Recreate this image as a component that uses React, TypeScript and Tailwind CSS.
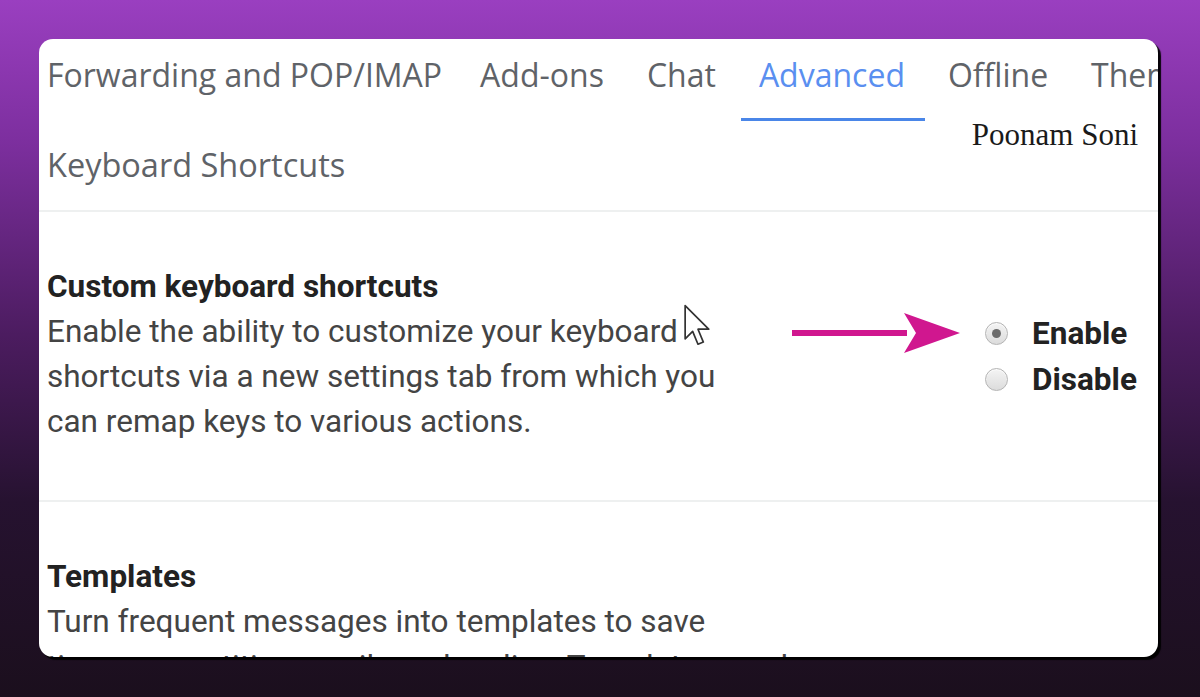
import React from 'react';

const tabs = ['Forwarding and POP/IMAP', 'Add-ons', 'Chat', 'Advanced', 'Offline', 'Themes'];

const Radio: React.FC<{ checked?: boolean; label: string }> = ({ checked, label }) => (
  <label className="flex items-center h-[46px]">
    <span className="w-[23px] h-[23px] rounded-full border border-[#b4b4b4] bg-gradient-to-b from-[#f4f4f4] to-[#dcdcdc] flex items-center justify-center shadow-[inset_0_1px_1px_rgba(255,255,255,0.8)]">
      {checked && <span className="w-[9px] h-[9px] rounded-full bg-[#6b6b6b]"></span>}
    </span>
    <span className="ml-[24px] text-[31.5px] font-bold text-[#222]">{label}</span>
  </label>
);

const Cursor = () => (
  <svg width="30" height="46" viewBox="0 0 28 42" className="absolute left-[636px] top-[-6px]">
    <path d="M2 2 L2 33 L9 26 L14 38 L19 36 L14 24 L24 24 Z" fill="#fff" stroke="#333" strokeWidth="1.6" strokeLinejoin="round" />
  </svg>
);

const App: React.FC = () => {
  return (
    <div className="w-[1200px] h-[697px] pt-[39px] pl-[39px] bg-[linear-gradient(180deg,#9a3fc0_0%,#7d2f9f_20%,#4c1c60_48%,#261230_72%,#1b0f1d_100%)] font-['Roboto',sans-serif]">
      <div className="relative w-[1119px] h-[618px] rounded-[14px] bg-white overflow-hidden shadow-[3px_3px_1px_rgba(0,0,0,0.95)]">
        {/* tabs */}
        <div className="flex h-[82px] pl-[8px] font-['Open_Sans',sans-serif] text-[32px] text-[#5f6368] whitespace-nowrap">
          {tabs.map((t, i) => (
            <div key={t} className={`relative flex items-center pb-[10px] ${i === 0 ? 'mr-[38px]' : 'mr-[43px]'} ${t === 'Advanced' ? 'text-[#5a8ff0]' : ''}`}>
              {t}
              {t === 'Advanced' && <span className="absolute left-[-18px] right-[-20px] bottom-0 h-[3px] bg-[#4a86e8]"></span>}
            </div>
          ))}
        </div>
        <div className="absolute right-[20px] top-[73px] font-['Liberation_Serif',serif] text-[31px] text-[#1a1a1a]">Poonam Soni</div>
        <div className="h-[89px] pl-[8px] flex items-center pb-[1px] font-['Open_Sans',sans-serif] text-[32.5px] text-[#5f6368]">Keyboard Shortcuts</div>
        <div className="h-[2px] bg-[#eef0f0]"></div>

        {/* custom shortcuts */}
        <div className="flex items-start pl-[8px] pt-[52px] h-[288px] text-[31.5px] leading-[45px]">
          <div className="relative w-[700px]">
            <div className="font-bold text-[#222]">Custom keyboard shortcuts</div>
            <div className="text-[#444] whitespace-nowrap">
              Enable the ability to customize your keyboard<br />
              shortcuts via a new settings tab from which you<br />
              can remap keys to various actions.
            </div>
            <div className="absolute top-[45px] left-0">
              <Cursor />
            </div>
          </div>
          <div className="flex items-start pt-[46px]">
            <svg width="170" height="46" viewBox="0 0 170 46" className="ml-[45px]">
              <path d="M0 23 L115 23" stroke="#d0178f" strokeWidth="6" />
              <path d="M112 3 L168 23 L112 43 L124 23 Z" fill="#d0178f" />
            </svg>
            <div className="ml-[23px] flex flex-col">
              <Radio checked label="Enable" />
              <Radio label="Disable" />
            </div>
          </div>
        </div>
        <div className="h-[2px] bg-[#eef0f0]"></div>

        {/* templates */}
        <div className="pl-[8px] pt-[52px] text-[31.5px] leading-[45px]">
          <div className="font-bold text-[#222]">Templates</div>
          <div className="text-[#444] whitespace-nowrap">
            Turn frequent messages into templates to save<br />
            time on repetitive emails and replies. Templates can be
          </div>
        </div>
      </div>
    </div>
  );
};

export default App;
